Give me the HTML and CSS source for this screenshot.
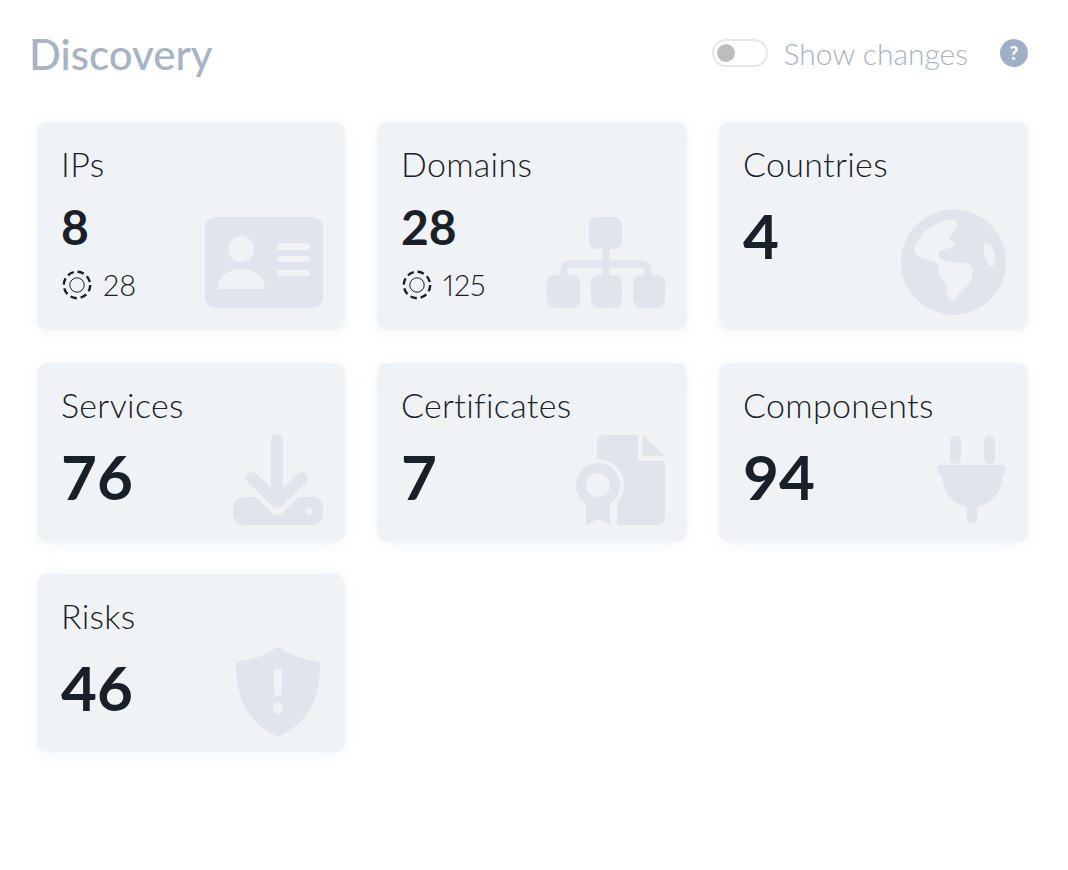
FILE: index.html
```html
<!doctype html>
<html>
<head>
<meta charset="utf-8">
<title>Discovery</title>
<link rel="stylesheet" href="styles.css">
</head>
<body>
<div class="panel">
	<div class="header">
		<h1 class="title">Discovery</h1>
		<div class="toggle"><div class="knob"></div></div>
		<div class="toggleLabel">Show changes</div>
		<div class="help">?</div>
	</div>
	<div class="grid">
		<div class="card">
			<div class="cardText">
				<div class="label">IPs</div>
				<div class="value small">8</div>
				<div class="sub">
					<svg class="ring" viewBox="0 0 30 30"><circle class="ringOuter" cx="15" cy="15" r="13.2"/><circle class="ringInner" cx="15" cy="15" r="7.2"/></svg>
					28
				</div>
			</div>
			<svg class="icon iconId" viewBox="0 0 118 91">
				<rect class="ico" width="118" height="91" rx="11"/>
				<circle class="cut" cx="36" cy="32" r="13"/>
				<path class="cut" d="M13 72c0-12 10-20 23-20s24 8 24 20z"/>
				<rect class="cut" x="72" y="26" width="33" height="7" rx="3"/>
				<rect class="cut" x="72" y="39" width="33" height="6" rx="3"/>
				<rect class="cut" x="72" y="53" width="33" height="6" rx="3"/>
			</svg>
		</div>
		<div class="card">
			<div class="cardText">
				<div class="label">Domains</div>
				<div class="value small">28</div>
				<div class="sub">
					<svg class="ring" viewBox="0 0 30 30"><circle class="ringOuter" cx="15" cy="15" r="13.2"/><circle class="ringInner" cx="15" cy="15" r="7.2"/></svg>
					125
				</div>
			</div>
			<svg class="icon iconOrg" viewBox="0 0 118 91">
				<rect class="ico" x="42" width="33" height="32" rx="8"/>
				<rect class="ico" y="58" width="33" height="33" rx="8"/>
				<rect class="ico" x="44" y="58" width="31" height="33" rx="8"/>
				<rect class="ico" x="86" y="58" width="32" height="33" rx="8"/>
				<path class="icoLine" d="M59 30v32"/>
				<path class="icoLine" d="M17 62v-9a6 6 0 0 1 6-6h72a6 6 0 0 1 6 6v9"/>
			</svg>
		</div>
		<div class="card">
			<div class="cardText">
				<div class="label">Countries</div>
				<div class="value big">4</div>
			</div>
			<svg class="icon iconGlobe" viewBox="0 0 316 318">
				<circle class="ico" cx="158" cy="159" r="158"/>
				<path class="cut" d="M40 122C48 96 60 76 78 62C100 46 120 36 140 34L160 32C172 34 170 48 163 62C156 74 146 82 148 90C150 98 166 100 163 108C158 118 133 118 118 126C108 132 112 148 133 156C150 160 180 158 204 166C220 174 218 196 208 217C198 236 182 244 173 256C168 270 160 276 150 272C138 266 140 248 136 234C130 216 118 206 114 190C112 176 116 166 104 160C88 154 66 150 50 140C42 134 38 128 40 122z"/>
				<path class="cut" d="M250 106c10-6 22 0 28 16 6 18 8 36 2 46-6 6-16 2-22-12-6-16-14-42-8-50z"/>
			</svg>
		</div>
		<div class="card short">
			<div class="cardText">
				<div class="label">Services</div>
				<div class="value big">76</div>
			</div>
			<svg class="icon iconDown" viewBox="0 0 90 91">
				<rect class="ico" y="63" width="90" height="28" rx="10"/>
				<path class="cutLine" d="M44 2v64M13 43l31 30 31-30"/>
				<path class="icoLine thick" d="M44 6v60M19 44l25 24 25-24"/>
				<circle class="cut" cx="76" cy="77" r="3.5"/>
			</svg>
		</div>
		<div class="card short">
			<div class="cardText">
				<div class="label">Certificates</div>
				<div class="value big">7</div>
			</div>
			<svg class="icon iconCert" viewBox="0 0 90 91">
				<path class="ico" d="M30 1h33v26h27v56a8 8 0 0 1-8 8H30a8 8 0 0 1-8-8V9a8 8 0 0 1 8-8z"/>
				<path class="ico" d="M68 1l22 21H68z"/>
				<circle class="cut" cx="23" cy="51" r="26"/>
				<path class="cut" d="M8 66h34v25H8z"/>
				<path class="ico" d="M11 68h24v23l-12-6-12 6z"/>
				<circle class="ico" cx="23" cy="51" r="22"/>
				<circle class="cut" cx="23" cy="51" r="12"/>
			</svg>
		</div>
		<div class="card short">
			<div class="cardText">
				<div class="label">Components</div>
				<div class="value big">94</div>
			</div>
			<svg class="icon iconPlug" viewBox="0 0 68 90">
				<rect class="ico" x="12" y="1" width="11" height="28" rx="5"/>
				<rect class="ico" x="46" y="1" width="11" height="28" rx="5"/>
				<path class="ico" d="M0 30h67v8l-3 3c0 20-14 28-25 31v12a5 5 0 0 1-10 0V72C16 68 5 60 4 41l-4-3z"/>
			</svg>
		</div>
		<div class="card short">
			<div class="cardText">
				<div class="label">Risks</div>
				<div class="value big">46</div>
			</div>
			<svg class="icon iconShield" viewBox="0 0 84 90">
				<path class="ico" d="M38 2c2-2 6-2 8 0 8 6 22 11 34 12 3 0 4 2 4 4 0 34-12 58-42 72C12 76 0 52 0 18c0-2 1-4 4-4 12-1 26-6 34-12z"/>
				<rect class="cut" x="38" y="22" width="8" height="27" rx="3"/>
				<circle class="cut" cx="42" cy="61" r="5.5"/>
			</svg>
		</div>
	</div>
</div>
</body>
</html>
```

FILE: styles.css
```css
html, body {
	margin: 0;
	padding: 0;
	background-color: rgb(255,255,255);
}

body {
	width: 1068px;
	height: 870px;
	overflow: hidden;
	font-family: "Lato", "Liberation Sans", sans-serif;
}

.panel {
	padding: 27px 40px 0px 29px;
}

.header {
	display: flex;
	align-items: center;
	height: 52px;
}

.title {
	flex: 1;
	margin: 2px 0px 0px 0px;
	font-size: 42px;
	font-weight: 500;
	color: rgb(166,180,196);
}

.toggle {
	box-sizing: border-box;
	width: 56px;
	height: 28px;
	padding: 3px;
	border: 2px solid rgb(228,230,232);
	border-radius: 14px;
}

.knob {
	width: 18px;
	height: 18px;
	border-radius: 50%;
	background-color: rgb(189,189,189);
}

.toggleLabel {
	margin-left: 16px;
	font-size: 30px;
	font-weight: 300;
	color: rgb(168,180,192);
}

.help {
	width: 28px;
	height: 28px;
	margin-left: 32px;
	border-radius: 50%;
	font-size: 19px;
	font-weight: 900;
	line-height: 28px;
	text-align: center;
	color: rgb(255,255,255);
	background-color: rgb(159,176,198);
}

.grid {
	display: grid;
	grid-template-columns: 308px 310px 309px;
	grid-template-rows: 208px 179px 178px;
	column-gap: 32px;
	row-gap: 32.5px;
	margin-top: 43px;
	margin-left: 8px;
}

.card {
	display: flex;
	justify-content: space-between;
	padding: 22px 22px 22px 24px;
	box-sizing: border-box;
	border-radius: 10px;
	background-color: rgb(239,243,246);
	box-shadow: 0px 2px 14px rgba(190,200,215,0.18);
}

.card.short {
	padding-bottom: 17px;
}

.cardText {
	color: rgb(26,32,39);
}

.label {
	font-size: 34px;
	font-weight: 300;
	line-height: 40px;
	letter-spacing: 0.3px;
}

.value {
	font-weight: 700;
}

.value.small {
	margin-top: 13px;
	font-size: 48px;
	line-height: 60px;
}

.value.big {
	margin-top: 16px;
	font-size: 62px;
	line-height: 70px;
}

.sub {
	display: flex;
	align-items: center;
	margin-top: 10px;
	font-size: 29px;
	font-weight: 300;
	line-height: 36px;
	font-feature-settings: "pnum";
}

.ring {
	width: 30px;
	height: 30px;
	margin-right: 11px;
	margin-left: 1px;
}

.ringOuter {
	fill: none;
	stroke: rgb(26,32,39);
	stroke-width: 2.4;
	stroke-dasharray: 6.5 3.9;
}

.ringInner {
	fill: none;
	stroke: rgb(26,32,39);
	stroke-width: 1;
}

.icon {
	flex: none;
	align-self: flex-end;
}

.iconId, .iconOrg {
	width: 118px;
	height: 91px;
}

.iconGlobe {
	width: 105px;
	height: 106px;
	margin-bottom: -7px;
}

.iconDown, .iconCert {
	width: 90px;
	height: 91px;
}

.iconPlug {
	width: 68px;
	height: 90px;
}

.iconShield {
	width: 84px;
	height: 90px;
	margin-right: 3px;
	margin-bottom: -2px;
}

.ico {
	fill: rgb(223,229,235);
}

.cut {
	fill: rgb(239,243,246);
}

.icoLine {
	fill: none;
	stroke: rgb(223,229,235);
	stroke-width: 7;
}

.icoLine.thick {
	stroke-width: 12;
	stroke-linecap: round;
	stroke-linejoin: round;
}

.cutLine {
	fill: none;
	stroke: rgb(239,243,246);
	stroke-width: 16;
	stroke-linejoin: round;
}
```
